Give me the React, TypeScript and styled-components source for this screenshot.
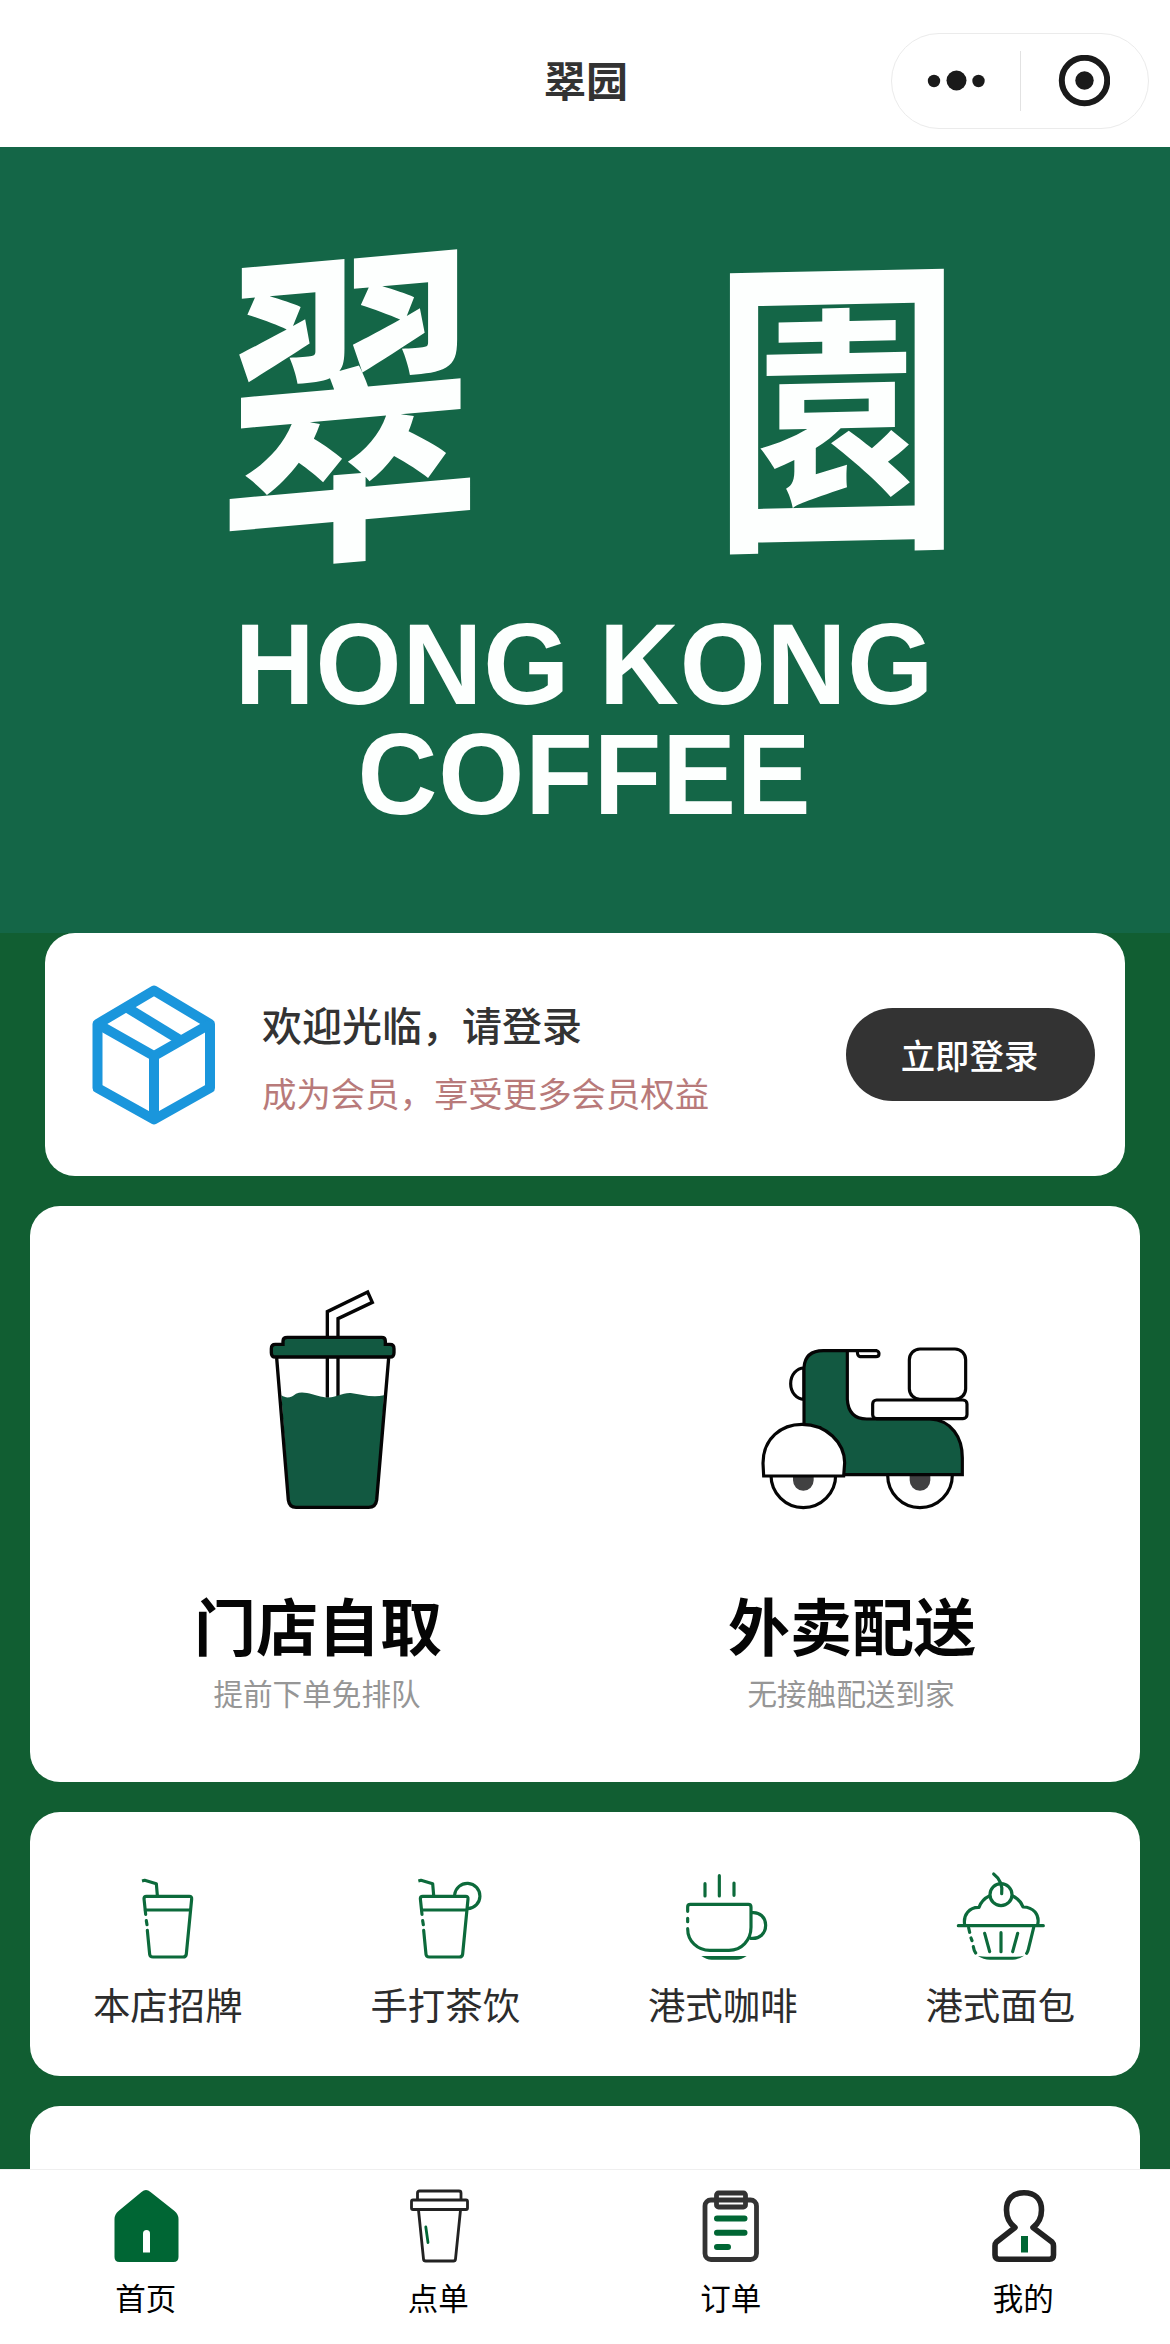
import React from "react";
import styled, { createGlobalStyle } from "styled-components";

const GREEN = "#0c6a3b";
const INK = "#222222";

const GlobalStyle = createGlobalStyle`
  * { box-sizing: border-box; }
  body {
    margin: 0;
    background: #115e32;
    font-family: "Noto Sans CJK SC", "Noto Sans", sans-serif;
  }
`;

const Page = styled.div`
  display: flex;
  flex-direction: column;
  width: 1170px;
  height: 2344px;
  background: #115e32;
`;

const NavBar = styled.header`
  display: grid;
  grid-template-columns: 1fr auto 1fr;
  align-items: center;
  flex: none;
  height: 147px;
  padding: 14px 21px 0;
  background: #fff;
`;

const NavTitle = styled.h1`
  grid-column: 2;
  margin: 0 0 4px 2px;
  font-size: 42px;
  line-height: 60px;
  font-weight: 700;
  color: #333;
`;

const Capsule = styled.div`
  justify-self: end;
  display: flex;
  align-items: center;
  width: 258px;
  height: 96px;
  border: 1.5px solid #ebebeb;
  border-radius: 48px;
`;

const CapsuleButton = styled.button`
  display: flex;
  align-items: center;
  justify-content: center;
  flex: 1;
  padding: 0;
  border: 0;
  background: none;
`;

const CapsuleDivider = styled.span`
  width: 1px;
  height: 60px;
  background: #e2e2e2;
`;

const Content = styled.main`
  display: flex;
  flex-direction: column;
  flex: 1;
`;

const Hero = styled.section`
  display: flex;
  flex-direction: column;
  align-items: center;
  height: 786px;
  padding-top: 98px;
  background: #146647;
  color: #fdfffe;
`;

const BrandRow = styled.div`
  display: grid;
  grid-template-columns: 246px 214px;
  column-gap: 257px;
  height: 330px;
`;

const BrandGlyph = styled.span<{ $size: number; $squeeze: number; $tilt: number }>`
  display: flex;
  justify-content: center;
  height: 286px;
  font-family: "Noto Sans CJK TC", "Noto Sans CJK SC", sans-serif;
  font-size: ${(p) => p.$size}px;
  line-height: 286px;
  font-weight: 700;
  transform: scaleX(${(p) => p.$squeeze}) skewY(${(p) => p.$tilt}deg);
`;

const BrandName = styled.p`
  margin: 34px 0 0;
  font-family: "Liberation Sans", Arial, sans-serif;
  font-size: 115px;
  line-height: 110px;
  font-weight: 700;
  letter-spacing: 0.9px;
  word-spacing: -3px;
  text-align: center;
  white-space: pre;
  transform: scaleX(0.962);
`;

const Card = styled.section`
  flex: none;
  margin: 30px 30px 0;
  border-radius: 30px;
  background: #fff;
`;

const LoginCard = styled(Card)`
  display: flex;
  align-items: center;
  height: 243px;
  margin: 0 45px;
  padding: 0 30px 0 45px;
`;

const LoginText = styled.div`
  flex: 1;
  margin: 2px 0 0 44px;
`;

const Welcome = styled.p`
  margin: 0;
  font-size: 40px;
  line-height: 58px;
  font-weight: 500;
  color: #333;
`;

const Benefit = styled.p`
  margin: 14px 0 0;
  font-size: 34.4px;
  line-height: 50px;
  color: #b87a7a;
`;

const LoginButton = styled.button`
  width: 249px;
  height: 93px;
  padding: 0 2px 2px 0;
  border: 0;
  border-radius: 47px;
  background: #333;
  color: #fff;
  font-family: inherit;
  font-size: 34.4px;
  line-height: 50px;
  font-weight: 500;
`;

const ServiceCard = styled(Card)`
  display: grid;
  grid-template-columns: 1fr 1fr;
  height: 576px;
  padding: 0 21px;
`;

const Service = styled.div`
  display: flex;
  flex-direction: column;
  align-items: center;
`;

const ServiceArt = styled.div`
  display: flex;
  align-items: flex-end;
  height: 307px;
`;

const ServiceTitle = styled.h2`
  margin: 66px 0 0;
  font-size: 62px;
  line-height: 90px;
  font-weight: 700;
  color: #050505;
`;

const ServiceHint = styled.p`
  margin: 2px 2px 0 0;
  font-size: 29.6px;
  line-height: 44px;
  color: #969696;
`;

const CategoryCard = styled(Card)`
  display: grid;
  grid-template-columns: repeat(4, 1fr);
  height: 264px;
  padding-top: 58px;
`;

const Category = styled.div`
  display: flex;
  flex-direction: column;
  align-items: center;
  gap: 14px;
`;

const CategoryLabel = styled.span`
  margin-right: 2px;
  font-size: 37.4px;
  line-height: 54px;
  color: #2c2c2c;
`;

const NextCard = styled(Card)`
  flex: 1;
  border-radius: 30px 30px 0 0;
`;

const TabBar = styled.nav`
  display: grid;
  grid-template-columns: repeat(4, 1fr);
  flex: none;
  height: 175px;
  padding-top: 18px;
  border-top: 1px solid #efefef;
  background: #fff;
`;

const Tab = styled.a`
  display: flex;
  flex-direction: column;
  align-items: center;
  gap: 11px;
`;

const TabLabel = styled.span`
  margin-right: 1px;
  font-size: 30.5px;
  line-height: 44px;
  color: #000;
`;

const MoreIcon = () => (
  <svg width="58" height="24" viewBox="0 0 58 24" fill="#1a1a1a">
    <circle cx="7" cy="12" r="6.2" />
    <circle cx="29.5" cy="11.500" r="10" />
    <circle cx="51.500" cy="12" r="6.2" />
  </svg>
);

const CloseIcon = () => (
  <svg width="52" height="52" viewBox="-0.5 0.5 52 52">
    <circle cx="26" cy="26" r="22.7" fill="none" stroke="#1a1a1a" strokeWidth="6" />
    <circle cx="26" cy="26" r="9.2" fill="#1a1a1a" />
  </svg>
);

const BoxIcon = () => (
  <svg width="128" height="144" viewBox="0 0 128 144" fill="none" stroke="#1a96dc" strokeWidth="10" strokeLinejoin="round">
    <path d="M64 7.500 120 41V105L64 136.500 7.500 105V41Z" />
    <path d="M7.500 41 64 73 120 41M64 73V136.500" />
    <path d="M36 24 90 57" />
  </svg>
);

const DrinkArt = () => (
  <svg width="160" height="226.67" viewBox="174 80 480 680" stroke="#050505" strokeWidth="10">
    <path d="M442 415V157L563 98L577 129L474 178V415" fill="#fff" />
    <path d="M304 408C322 420 335 413 348 403C372 393 400 408 430 413C465 420 480 400 512 401C545 405 575 416 612 408L592 724Q590 744 568 744H350Q330 744 327 724Z" fill="#125941" stroke="none" />
    <path d="M290 296L325 722Q328 744 348 744H566Q587 744 590 722L626 296" fill="none" />
    <path d="M322 234H605Q616 234 616 245V255H630Q642 255 642 268V280Q642 293 630 293H286Q274 293 274 280V268Q274 255 286 255H309V245Q309 234 322 234Z" fill="#125941" />
  </svg>
);

const ScooterArt = () => (
  <svg width="240" height="186.67" viewBox="36 80 720 560" stroke="#050505" strokeWidth="9.500" fill="#fff">
    <circle cx="250" cy="528" r="97" />
    <circle cx="600" cy="528" r="97" />
    <path d="M219 528V543A31 31 0 0 0 281 543V528ZM569 528V543A31 31 0 0 0 631 543V528Z" fill="#414142" stroke="none" />
    <path d="M252 206A40 47 0 0 0 252 300Z" />
    <path d="M252 385V205Q255 154 310 154H382V300Q385 358 440 359H630C695 362 727 415 727 475V526H365L300 385Z" fill="#125941" />
    <path d="M380 154H470Q477 156 477 163Q477 172 468 172H420Q412 171 412 155" />
    <rect x="458" y="302" width="283" height="56" rx="12" />
    <rect x="568" y="149" width="169" height="151" rx="32" />
    <path d="M131 530L129 492C129 416 185 375 246 375C320 375 373 430 374 490L371 530Z" />
  </svg>
);

interface LineIconProps {
  left: number;
  children: React.ReactNode;
}

const LineIcon = ({ left, children }: LineIconProps) => (
  <svg
    width="100"
    height="93.33"
    viewBox={`${left} 120 300 280`}
    fill="none"
    stroke={GREEN}
    strokeWidth="9.5"
    strokeLinecap="round"
    strokeLinejoin="round"
  >
    {children}
  </svg>
);

const TumblerLines = () => (
  <>
    <path d="M246 153L254 151L289 161L292 196" strokeLinecap="butt" />
    <path d="M257 253L252 206Q252 199 259 199H388Q396 199 395 207L379 372Q378 381 369 381H279Q270 381 269 373L262 301" />
    <path d="M259 272L261 284M256 240H390" />
  </>
);

const SignatureIcon = () => (
  <LineIcon left={177}>
    <TumblerLines />
  </LineIcon>
);

const TeaIcon = () => (
  <LineIcon left={179}>
    <TumblerLines />
    <path d="M355 194A38 38 0 1 1 394 236" />
  </LineIcon>
);

const CoffeeIcon = () => (
  <LineIcon left={252}>
    <path d="M345 161V198M388 137V198M432 159V196" />
    <path d="M293 244V230Q293 223 301 223H475Q483 223 483 231V292C483 330 455 361 417 361H360C322 361 293 333 293 296M293 265V275" />
    <path d="M485 248C510 245 527 263 527 286C527 310 509 328 482 325" />
    <path d="M334 378H470C460 385 450 389 440 389H365C354 389 344 385 334 378Z" fill={GREEN} stroke="none" />
  </LineIcon>
);

const CakeIcon = () => (
  <LineIcon left={1083}>
    <path d="M1211 132C1228 145 1239 162 1235 191" />
    <circle cx="1233" cy="194" r="33" />
    <path d="M1198 198Q1176 208 1167 232C1138 231 1119 255 1124 284M1268 198Q1292 210 1299 231C1330 231 1350 254 1343 284" />
    <path d="M1105 287H1360M1136 294L1139 307M1143 324L1146 332M1150 350Q1152 362 1157 369M1331 293L1315 358Q1313 366 1310 370" />
    <path d="M1184 310L1199 365M1233 308V365M1283 310L1268 365" />
    <path d="M1164 378Q1180 380 1190 380H1275Q1290 380 1302 377Q1285 389 1268 389H1200Q1180 389 1164 378Z" fill={GREEN} stroke="none" />
  </LineIcon>
);

const HomeIcon = () => (
  <svg width="72" height="76" viewBox="0 0 72 76">
    <path d="M31.500 4Q36 0 40.500 4L64.500 23Q68.500 26.500 68.500 31V69Q68.500 74 63.500 74H9.500Q4.500 74 4.500 69V31Q4.500 26.500 8.500 23Z" fill="#006634" />
    <path d="M33 64.500V45.500Q33 42 36.500 42Q40 42 40 45.500V64.500Z" fill="#fff" />
  </svg>
);

const OrderCupIcon = () => (
  <svg width="72" height="76" viewBox="0 0 72 76" fill="none" stroke={INK} strokeWidth="2.800" strokeLinejoin="round">
    <path d="M14.500 11.500V5Q14.500 3 16.500 3H56Q58 3 58 5V11.500" />
    <rect x="8.500" y="12" width="56" height="9.500" rx="1.500" />
    <path d="M15.500 22L20.500 71Q20.700 73 22.700 73H50.500Q52.300 73 52.500 71L57.500 22" />
    <path d="M22.800 39L25 54.500" stroke="#006634" strokeLinecap="round" />
  </svg>
);

const OrdersIcon = () => (
  <svg width="72" height="76" viewBox="0 0 72 76" fill="none" stroke="#333" strokeWidth="4.800">
    <rect x="10" y="12" width="51.500" height="59.500" rx="6" />
    <rect x="21.500" y="5" width="29" height="14" rx="2" />
    <path d="M22 12H50" strokeWidth="3.500" />
    <path d="M22 30.500H49.500M22 44.700H49.500M22 59H33" stroke="#006634" strokeWidth="6" strokeLinecap="round" />
  </svg>
);

const ProfileIcon = () => (
  <svg width="72" height="76" viewBox="0 0 72 76" fill="none" stroke={INK} strokeWidth="5.600" strokeLinejoin="round">
    <path d="M27 39.500C21 35 18.500 29 18.500 22C18.500 11 25 4.700 36 4.700C47 4.700 53.500 11 53.500 22C53.500 29 51 35 45 39.500L64 54Q65.500 55.500 65.500 58V67Q65.500 71.200 61.500 71.200H11Q7 71.200 7 67V58Q7 55.500 8.500 54Z" />
    <path d="M36.500 48V64.500" stroke="#006634" strokeWidth="7" />
  </svg>
);

const services = [
  { title: "门店自取", hint: "提前下单免排队", Art: DrinkArt },
  { title: "外卖配送", hint: "无接触配送到家", Art: ScooterArt },
];

const categories = [
  { label: "本店招牌", Icon: SignatureIcon },
  { label: "手打茶饮", Icon: TeaIcon },
  { label: "港式咖啡", Icon: CoffeeIcon },
  { label: "港式面包", Icon: CakeIcon },
];

const tabs = [
  { label: "首页", Icon: HomeIcon },
  { label: "点单", Icon: OrderCupIcon },
  { label: "订单", Icon: OrdersIcon },
  { label: "我的", Icon: ProfileIcon },
];

export default function App() {
  return (
    <Page>
      <GlobalStyle />
      <NavBar>
        <NavTitle>翠园</NavTitle>
        <Capsule>
          <CapsuleButton aria-label="更多">
            <MoreIcon />
          </CapsuleButton>
          <CapsuleDivider />
          <CapsuleButton aria-label="关闭">
            <CloseIcon />
          </CapsuleButton>
        </Capsule>
      </NavBar>
      <Content>
        <Hero>
          <BrandRow>
            <BrandGlyph $size={334} $squeeze={0.79} $tilt={-4}>翠</BrandGlyph>
            <BrandGlyph $size={312} $squeeze={0.8} $tilt={-1}>園</BrandGlyph>
          </BrandRow>
          <BrandName>{"HONG KONG\nCOFFEE"}</BrandName>
        </Hero>
        <LoginCard>
          <BoxIcon />
          <LoginText>
            <Welcome>欢迎光临，请登录</Welcome>
            <Benefit>成为会员，享受更多会员权益</Benefit>
          </LoginText>
          <LoginButton>立即登录</LoginButton>
        </LoginCard>
        <ServiceCard>
          {services.map(({ title, hint, Art }) => (
            <Service key={title}>
              <ServiceArt>
                <Art />
              </ServiceArt>
              <ServiceTitle>{title}</ServiceTitle>
              <ServiceHint>{hint}</ServiceHint>
            </Service>
          ))}
        </ServiceCard>
        <CategoryCard>
          {categories.map(({ label, Icon }) => (
            <Category key={label}>
              <Icon />
              <CategoryLabel>{label}</CategoryLabel>
            </Category>
          ))}
        </CategoryCard>
        <NextCard />
      </Content>
      <TabBar>
        {tabs.map(({ label, Icon }) => (
          <Tab key={label}>
            <Icon />
            <TabLabel>{label}</TabLabel>
          </Tab>
        ))}
      </TabBar>
    </Page>
  );
}
